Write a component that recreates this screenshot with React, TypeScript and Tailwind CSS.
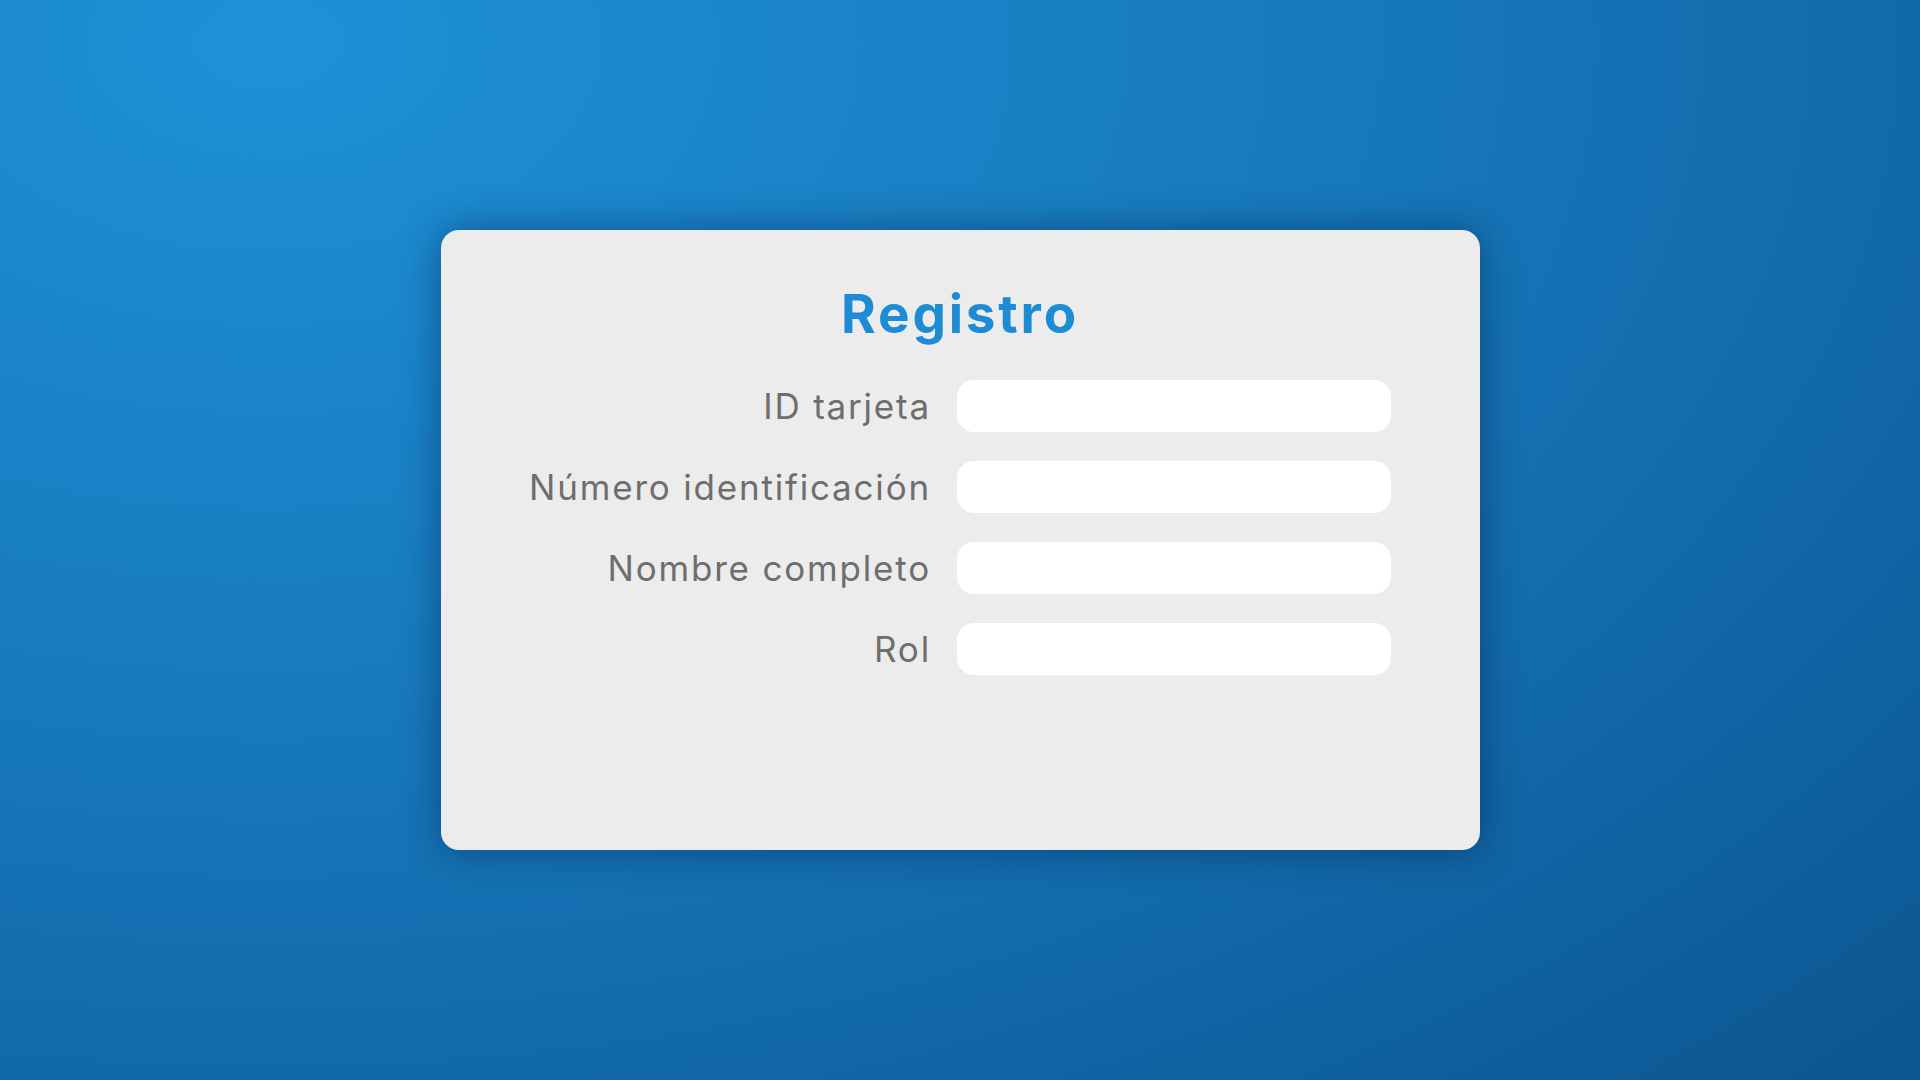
import React from "react";

const fields = ["ID tarjeta", "Número identificación", "Nombre completo", "Rol"];

export default function App() {
  return (
    <div
      className="w-full h-[1080px] flex items-start justify-center pt-[230px] bg-[radial-gradient(ellipse_at_14%_4%,#1e91d6_0%,#1677ba_50%,#0c5591_100%)]"
      style={{ fontFamily: "Inter, 'Noto Sans', sans-serif" }}
    >
      <div className="w-[1039px] h-[620px] bg-[#ececec] rounded-[18px] shadow-[0_0_40px_rgba(0,20,60,0.45)] flex flex-col items-center pt-[58px]">
        <h1 className="text-[53px] leading-[53px] font-bold text-[#1e8cd4] tracking-[2.8px]">Registro</h1>
        <div className="mt-[39px] grid grid-cols-[auto_434px] gap-x-[26px] gap-y-[29px] items-center">
          {fields.map((f) => (
            <React.Fragment key={f}>
              <label className="text-right text-[35px] leading-none text-[#6e6e6e] tracking-[1.8px]">{f}</label>
              <input
                type="text"
                className="h-[52px] w-[434px] rounded-[17px] bg-white outline-none border-0"
              />
            </React.Fragment>
          ))}
        </div>
      </div>
    </div>
  );
}
